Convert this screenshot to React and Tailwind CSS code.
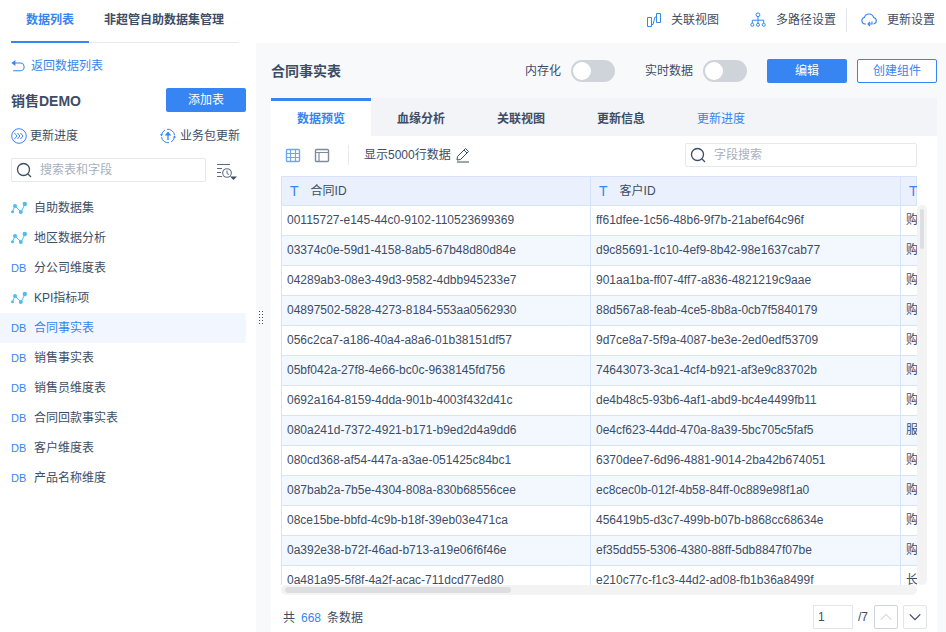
import { useState } from "react";

const TABLES = [
	{ name: "自助数据集", type: "chart" },
	{ name: "地区数据分析", type: "chart" },
	{ name: "分公司维度表", type: "db" },
	{ name: "KPI指标项", type: "chart" },
	{ name: "合同事实表", type: "db" },
	{ name: "销售事实表", type: "db" },
	{ name: "销售员维度表", type: "db" },
	{ name: "合同回款事实表", type: "db" },
	{ name: "客户维度表", type: "db" },
	{ name: "产品名称维度", type: "db" },
];

const ROWS = [
	["00115727-e145-44c0-9102-110523699369", "ff61dfee-1c56-48b6-9f7b-21abef64c96f", "购"],
	["03374c0e-59d1-4158-8ab5-67b48d80d84e", "d9c85691-1c10-4ef9-8b42-98e1637cab77", "购"],
	["04289ab3-08e3-49d3-9582-4dbb945233e7", "901aa1ba-ff07-4ff7-a836-4821219c9aae", "购"],
	["04897502-5828-4273-8184-553aa0562930", "88d567a8-feab-4ce5-8b8a-0cb7f5840179", "购"],
	["056c2ca7-a186-40a4-a8a6-01b38151df57", "9d7ce8a7-5f9a-4087-be3e-2ed0edf53709", "购"],
	["05bf042a-27f8-4e66-bc0c-9638145fd756", "74643073-3ca1-4cf4-b921-af3e9c83702b", "购"],
	["0692a164-8159-4dda-901b-4003f432d41c", "de4b48c5-93b6-4af1-abd9-bc4e4499fb11", "购"],
	["080a241d-7372-4921-b171-b9ed2d4a9dd6", "0e4cf623-44dd-470a-8a39-5bc705c5faf5", "服"],
	["080cd368-af54-447a-a3ae-051425c84bc1", "6370dee7-6d96-4881-9014-2ba42b674051", "购"],
	["087bab2a-7b5e-4304-808a-830b68556cee", "ec8cec0b-012f-4b58-84ff-0c889e98f1a0", "购"],
	["08ce15be-bbfd-4c9b-b18f-39eb03e471ca", "456419b5-d3c7-499b-b07b-b868cc68634e", "购"],
	["0a392e38-b72f-46ad-b713-a19e06f6f46e", "ef35dd55-5306-4380-88ff-5db8847f07be", "购"],
	["0a481a95-5f8f-4a2f-acac-711dcd77ed80", "e210c77c-f1c3-44d2-ad08-fb1b36a8499f", "长"],
];

const TABS = ["数据预览", "血缘分析", "关联视图", "更新信息"];

function Icon({ size = 16, className = "", children }) {
	return (
		<svg
			width={size}
			height={size}
			viewBox="0 0 16 16"
			fill="none"
			stroke="currentColor"
			className={`shrink-0 ${className}`}
			aria-hidden="true"
		>
			{children}
		</svg>
	);
}

function SearchIcon() {
	return (
		<Icon className="text-[#3d4d66]">
			<circle cx="7.5" cy="7.5" r="6" strokeWidth="1.3" />
			<path d="M12 12l3 3" strokeWidth="1.3" />
		</Icon>
	);
}

function ChartIcon() {
	return (
		<Icon className="text-[#4dbef0]">
			<path d="M1.5 11.5L4 6l6 6L14 4" />
			<g fill="currentColor" stroke="none">
				<circle cx="1.5" cy="11.7" r="1.5" />
				<circle cx="4" cy="6" r="2" />
				<circle cx="9.8" cy="12" r="2" />
				<circle cx="13.8" cy="4" r="2.2" />
			</g>
		</Icon>
	);
}

function SearchBox({ label, className }) {
	return (
		<label className={`flex h-6 items-center gap-2 rounded-xs border border-[#e6e8ec] bg-white px-1 ${className}`}>
			<SearchIcon />
			<input
				type="text"
				aria-label={label}
				placeholder={label}
				className="w-full min-w-0 outline-none placeholder:text-[#a8b0be]"
			/>
		</label>
	);
}

function Toggle({ label }) {
	return (
		<label className="flex items-center gap-2.5">
			{label}
			<input type="checkbox" role="switch" className="peer sr-only" />
			<span className="flex h-[22px] w-11 items-center rounded-full bg-[#cfd3da] px-0.5 peer-checked:justify-end peer-checked:bg-[#3685f2]">
				<span className="size-[18px] rounded-full bg-white" />
			</span>
		</label>
	);
}

function Header() {
	return (
		<header className="flex h-[43px] shrink-0 justify-between bg-white pl-[11px]">
			<nav className="flex w-[228px] border-b border-[#e8eaed] font-bold">
				<button className="-mb-px h-[43px] border-b-2 border-[#3685f2] px-[15px] pb-0.5 text-[#3685f2]">
					数据列表
				</button>
				<button className="px-[15px] pb-[3px]">非超管自助数据集管理</button>
			</nav>
			<div className="flex h-[39px] items-center pr-[11px]">
				<button className="flex items-center gap-[9px]">
					<Icon className="text-[#3685f2]">
						<path d="M1.5 5.5h4v9h-4zM10.500 1.500h4v9h-4zM5.500 12.500H7l2-7.500h1.500" />
					</Icon>
					关联视图
				</button>
				<button className="ml-[31px] flex items-center gap-2.5 pr-2.5">
					<Icon className="text-[#3685f2]">
						<circle cx="8" cy="2.8" r="1.9" />
						<path d="M8 4.7v6.5M2.3 11V8.2h11.4V11" />
						<circle cx="2.3" cy="12.8" r="1.5" />
						<circle cx="8" cy="12.8" r="1.5" />
						<circle cx="13.7" cy="12.8" r="1.5" />
					</Icon>
					多路径设置
				</button>
				<button className="flex h-6 items-center gap-2.5 border-l border-[#e1e4e8] pl-3.5">
					<Icon className="text-[#3685f2]">
						<path d="M5 12H4a3.3 3.3 0 0 1-.6-6.5A4.8 4.8 0 0 1 12.6 5.5A3.3 3.3 0 0 1 12.5 12" strokeWidth="1.1" />
						<path d="M11 9.5V12H7.5M9 10l-2 2 2 2" strokeWidth="1.1" />
					</Icon>
					更新设置
				</button>
			</div>
		</header>
	);
}

function Sidebar() {
	const [selected, setSelected] = useState("合同事实表");

	return (
		<aside className="w-64 shrink-0 bg-white pr-2.5">
			<div className="pl-[11px]">
				<a href="#list" className="mt-[13px] flex h-5 items-center gap-1.5 text-[#3685f2]">
					<Icon size={14}>
						<path d="M2 4.5h8.500a4 4 0 0 1 0 9H2.500" strokeWidth="1.2" />
						<path d="M.5 4.500L5 1v7z" fill="currentColor" stroke="none" />
					</Icon>
					返回数据列表
				</a>
				<div className="mt-3 flex h-6 items-center justify-between">
					<h1 className="pt-0.5 text-sm font-bold">销售DEMO</h1>
					<button className="h-6 w-20 rounded-xs bg-[#3685f2] text-white">添加表</button>
				</div>
				<div className="mt-3.5 flex h-5 items-center justify-between pr-1.5">
					<button className="flex items-center gap-[3px]">
						<Icon className="text-[#3685f2]">
							<circle cx="8" cy="8" r="7.3" />
							<path d="M3.5 5L6 8l-2.500 3M6.500 5L9 8l-2.500 3M9.500 5L12 8l-2.500 3" />
						</Icon>
						更新进度
					</button>
					<button className="flex items-center gap-1">
						<Icon className="text-[#3685f2]">
							<path d="M1.5 7A6.7 6.7 0 0 1 5 2M7 1.3A6.7 6.7 0 0 1 14.5 7M14.5 9A6.7 6.7 0 0 1 11 14M9 14.7A6.7 6.7 0 0 1 1.5 9" />
							<path d="M8 12V6" strokeWidth="1.3" />
							<path d="M8 3.5l3.3 4H4.700zM0 6.300h3L1.500 8.600zM13 9.500h3l-1.500-2.300z" fill="currentColor" stroke="none" />
						</Icon>
						业务包更新
					</button>
				</div>
				<div className="mt-3 flex items-center justify-between pr-[9px]">
					<SearchBox label="搜索表和字段" className="w-[195px]" />
					<button aria-label="排序" className="pt-1">
						<svg width="21" height="18" viewBox="0 0 21 18" fill="none" stroke="#5d6b82" aria-hidden="true">
							<path d="M1 1.500h13M1 5.500h5M1 9.500h4M1 13.500h5" strokeWidth="1.1" />
							<circle cx="11" cy="10" r="4.3" strokeWidth="1.1" />
							<path d="M11 7.500v3l2 1" />
							<path d="M14 13.500h7L17.500 17z" fill="#3d4d66" stroke="none" />
						</svg>
					</button>
				</div>
			</div>
			<ul className="mt-[11px]">
				{TABLES.map(({ name, type }) => (
					<li key={name}>
						<button
							onClick={() => setSelected(name)}
							className={`flex h-[30px] w-full items-center pl-[11px] text-left ${
								name === selected ? "bg-[#f2f7ff] text-[#3685f2]" : ""
							}`}
						>
							<span className="flex w-[23px] items-center">
								{type === "chart" ? (
									<ChartIcon />
								) : (
									<span className="text-[11px] text-[#3685f2]">DB</span>
								)}
							</span>
							{name}
						</button>
					</li>
				))}
			</ul>
		</aside>
	);
}

function ColumnTitle({ children }) {
	return (
		<th className="h-[29px] border border-[#d6e3fa] bg-[#eaf1fd] pl-2 text-left font-normal">
			<span className="flex items-center gap-3">
				<span className="text-sm leading-4 text-[#3685f2]">T</span>
				{children}
			</span>
		</th>
	);
}

function DataTable() {
	return (
		<div className="mt-[9px] ml-2.5 grid min-h-0 flex-1 grid-cols-[minmax(0,1fr)_10px] grid-rows-[minmax(0,1fr)_10px]">
			<div className="overflow-hidden">
				<table className="w-full table-fixed border-collapse">
					<colgroup>
						<col className="w-[309px]" />
						<col className="w-[310px]" />
						<col />
					</colgroup>
					<thead>
						<tr>
							<ColumnTitle>合同ID</ColumnTitle>
							<ColumnTitle>客户ID</ColumnTitle>
							<ColumnTitle />
						</tr>
					</thead>
					<tbody>
						{ROWS.map((row) => (
							<tr key={row[0]} className="even:bg-[#f3f8ff]">
								{row.map((cell, i) => (
									<td
										key={i}
										className="h-[30px] overflow-hidden border border-[#d6e3fa] pb-0.5 pl-[5px] last:border-r-0"
									>
										{cell}
									</td>
								))}
							</tr>
						))}
					</tbody>
				</table>
			</div>
			<div className="mt-[29px] rounded-md bg-[#f3f3f4] px-[3px] py-1">
				<div className="h-10 rounded-full bg-[#dcdee2]" />
			</div>
			<div className="rounded-md bg-[#f3f3f4] px-1 py-0.5">
				<div className="h-1.5 w-[36%] rounded-full bg-[#dcdee2]" />
			</div>
		</div>
	);
}

function Pager() {
	return (
		<footer className="mt-2.5 mb-[3px] flex h-6 shrink-0 items-center pr-2.5 pl-3">
			<p className="flex gap-1.5 pt-px">
				共 <span className="text-[#3685f2]">668</span> 条数据
			</p>
			<input
				type="text"
				aria-label="页码"
				defaultValue="1"
				className="mr-[5px] ml-auto h-6 w-10 border border-[#e1e4e9] px-1 outline-none"
			/>
			/7
			<button
				aria-label="上一页"
				disabled
				className="ml-1.5 flex size-6 items-center justify-center rounded-xs border border-[#cfd3da] text-[#d4d7dd]"
			>
				<Icon size={14}>
					<path d="M2 11l6-6 6 6" strokeWidth="1.2" />
				</Icon>
			</button>
			<button
				aria-label="下一页"
				className="ml-[5px] flex size-6 items-center justify-center rounded-xs border border-[#e1e4e9]"
			>
				<Icon size={14}>
					<path d="M2 5l6 6 6-6" strokeWidth="1.5" />
				</Icon>
			</button>
		</footer>
	);
}

export default function App() {
	const [tab, setTab] = useState("数据预览");

	return (
		<div className="flex h-screen flex-col overflow-hidden bg-[#f7f9fb] font-['Liberation_Sans','Noto_Sans_CJK_SC',sans-serif] text-xs text-[#3d4d66]">
			<Header />
			<div className="flex min-h-0 flex-1">
				<Sidebar />
				<div className="flex w-[15px] shrink-0 items-center justify-start pb-10 pl-[3px]">
					<svg width="5" height="13" viewBox="0 0 5 13" fill="#3d4d66" aria-hidden="true">
						{[0, 3, 6, 9, 12].map((y) => (
							<g key={y}>
								<rect y={y} width="1" height="1" />
								<rect x="3" y={y} width="1" height="1" />
							</g>
						))}
					</svg>
				</div>
				<main className="flex min-w-0 flex-1 flex-col pr-[9px]">
					<div className="mt-4 flex h-6 shrink-0 items-center">
						<h2 className="mr-auto text-sm font-bold">合同事实表</h2>
						<div className="flex gap-[30px] pr-5">
							<Toggle label="内存化" />
							<Toggle label="实时数据" />
						</div>
						<button className="h-6 w-20 rounded-xs bg-[#3685f2] text-white">编辑</button>
						<button className="ml-2.5 h-6 w-20 rounded-xs border border-[#3685f2] bg-white text-[#3685f2]">
							创建组件
						</button>
					</div>
					<section className="mt-[15px] flex min-h-0 flex-1 flex-col bg-white">
						<div role="tablist" className="flex h-[38px] shrink-0 bg-[#f2f4f8]">
							{TABS.map((name) => (
								<button
									key={name}
									role="tab"
									aria-selected={name === tab}
									onClick={() => setTab(name)}
									className={`w-[100px] border-t-3 font-bold ${
										name === tab ? "border-[#3685f2] bg-white text-[#3685f2]" : "border-transparent"
									}`}
								>
									{name}
								</button>
							))}
							<button className="w-[100px] border-t-3 border-transparent text-[#3685f2]">更新进度</button>
						</div>
						<div className="mt-[7px] flex h-6 shrink-0 items-center pr-5 pl-3.5">
							<button aria-label="表格" className="text-[#6ea6f6]">
								<Icon>
									<rect x="1.5" y="2.5" width="13" height="12" rx="1" strokeWidth="1.4" />
									<path d="M5.5 2.500v12M10.500 2.500v12M1.500 6.500h13M1.500 10.500h13" strokeWidth="1.2" />
								</Icon>
							</button>
							<button aria-label="结构" className="ml-[13px] text-[#7f8a9c]">
								<Icon>
									<rect x="1.5" y="2.5" width="13" height="12" rx="1" strokeWidth="1.4" />
									<path d="M1.500 5.500h13M5 5.500v9" strokeWidth="1.2" />
								</Icon>
							</button>
							<span className="ml-[18px] h-5 border-l border-[#e8eaed] pl-[15px] leading-5">显示5000行数据</span>
							<button aria-label="修改行数" className="ml-1">
								<Icon>
									<path d="M2.500 9.500L10.500 1.500l3 3-8 8-3.500.500zM9 3l3 3M2 15h12" />
								</Icon>
							</button>
							<SearchBox label="字段搜索" className="ml-auto w-[232px]" />
						</div>
						<div className="flex min-h-0 flex-1 flex-col pr-2.5">
							<DataTable />
						</div>
						<Pager />
					</section>
				</main>
			</div>
		</div>
	);
}
